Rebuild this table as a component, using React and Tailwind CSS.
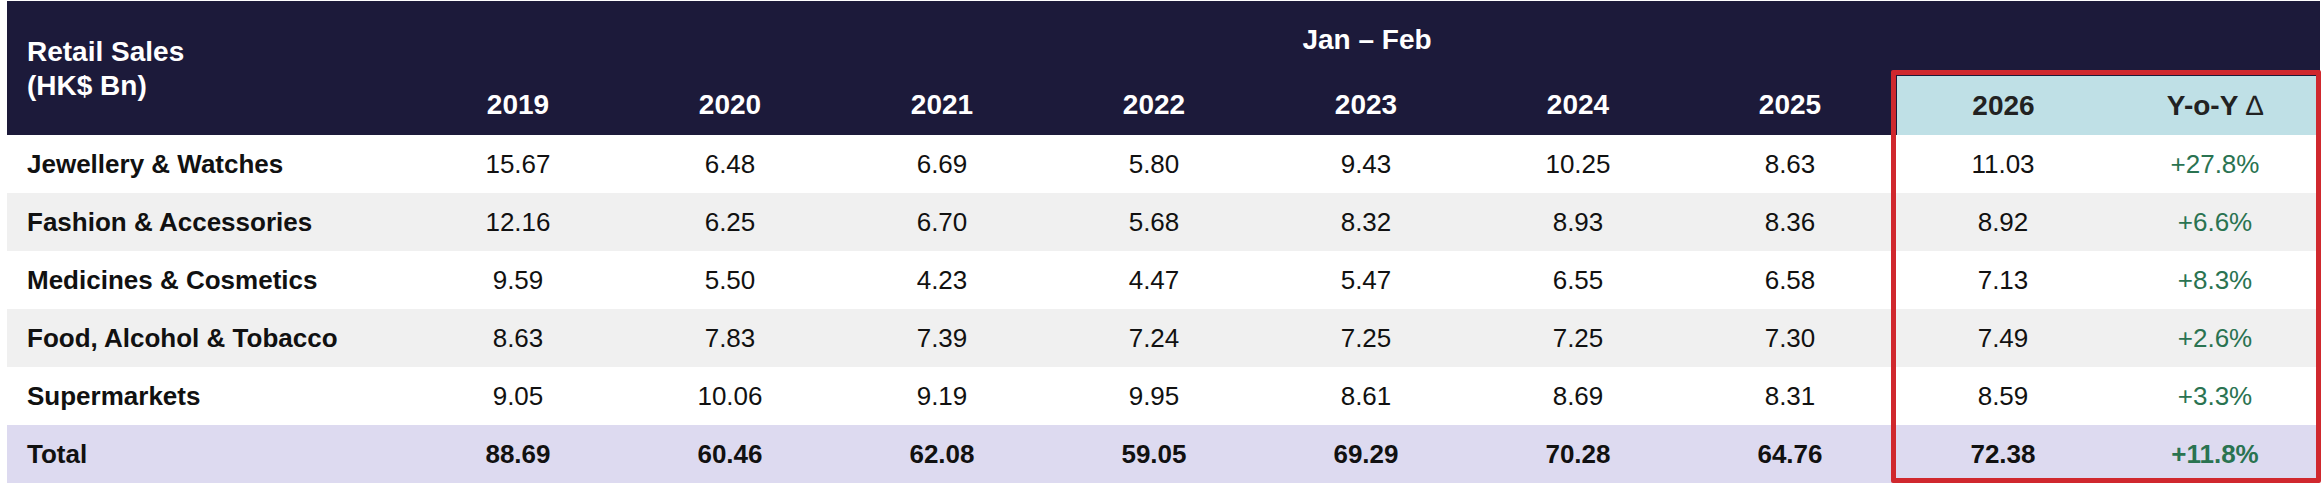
import React from "react";

const years = ["2019", "2020", "2021", "2022", "2023", "2024", "2025"];

const rows = [
  { label: "Jewellery & Watches", vals: ["15.67", "6.48", "6.69", "5.80", "9.43", "10.25", "8.63"], cur: "11.03", yoy: "+27.8%", bg: "bg-white" },
  { label: "Fashion & Accessories", vals: ["12.16", "6.25", "6.70", "5.68", "8.32", "8.93", "8.36"], cur: "8.92", yoy: "+6.6%", bg: "bg-[#f0f0f0]" },
  { label: "Medicines & Cosmetics", vals: ["9.59", "5.50", "4.23", "4.47", "5.47", "6.55", "6.58"], cur: "7.13", yoy: "+8.3%", bg: "bg-white" },
  { label: "Food, Alcohol & Tobacco", vals: ["8.63", "7.83", "7.39", "7.24", "7.25", "7.25", "7.30"], cur: "7.49", yoy: "+2.6%", bg: "bg-[#f0f0f0]" },
  { label: "Supermarkets", vals: ["9.05", "10.06", "9.19", "9.95", "8.61", "8.69", "8.31"], cur: "8.59", yoy: "+3.3%", bg: "bg-white" },
];

const total = { label: "Total", vals: ["88.69", "60.46", "62.08", "59.05", "69.29", "70.28", "64.76"], cur: "72.38", yoy: "+11.8%" };

const grid = "grid grid-cols-[405px_repeat(7,212px)_214px_210px]";

export default function App() {
  return (
    <div className="relative w-[2324px] h-[486px] bg-white font-['Liberation_Sans',Arial,sans-serif]">
      <div className="pt-[1px] pl-[7px]">
        <div className="w-[2313px]">
          {/* Header */}
          <div className={`${grid} bg-[#1c1a3a] text-white text-[28px] font-bold`}>
            <div className="row-span-2 pl-[20px] pt-[34px] leading-[34px]">
              <div>Retail Sales</div>
              <div>(HK$ Bn)</div>
            </div>
            <div className="col-span-9 h-[74px] pt-[22px] leading-[34px] pl-[2px] text-center">
              Jan – Feb
            </div>
            {years.map((y) => (
              <div key={y} className="h-[60px] flex items-center justify-center leading-[34px]">
                {y}
              </div>
            ))}
            <div className="h-[60px] flex items-center justify-center leading-[34px] bg-[#bfe0e6] text-[#222222] border-t border-l border-[#1c1a3a]">
              2026
            </div>
            <div className="h-[60px] flex items-center justify-center leading-[34px] bg-[#bfe0e6] text-[#222222] border-t border-[#1c1a3a]">
              Y-o-Y&nbsp;<span className="font-normal">∆</span>
            </div>
          </div>

          {/* Body rows */}
          {rows.map((r) => (
            <div key={r.label} className={`${grid} ${r.bg} h-[58px] items-center text-[26px] leading-[30px] text-[#111111]`}>
              <div className="pl-[20px] font-bold">{r.label}</div>
              {r.vals.map((v, i) => (
                <div key={i} className="text-center">{v}</div>
              ))}
              <div className="text-center">{r.cur}</div>
              <div className="text-center text-[#2a7351]">{r.yoy}</div>
            </div>
          ))}

          {/* Total */}
          <div className={`${grid} bg-[#dddaf0] h-[58px] items-center text-[26px] leading-[30px] font-bold text-[#111111]`}>
            <div className="pl-[20px]">{total.label}</div>
            {total.vals.map((v, i) => (
              <div key={i} className="text-center">{v}</div>
            ))}
            <div className="text-center">{total.cur}</div>
            <div className="text-center text-[#2a7351]">{total.yoy}</div>
          </div>
        </div>
      </div>

      {/* Highlight box overlay */}
      <div className="absolute left-[1891px] top-[70px] w-[430px] h-[413px] border-[5px] border-[#d0282e] rounded-[2px] pointer-events-none" />
    </div>
  );
}
